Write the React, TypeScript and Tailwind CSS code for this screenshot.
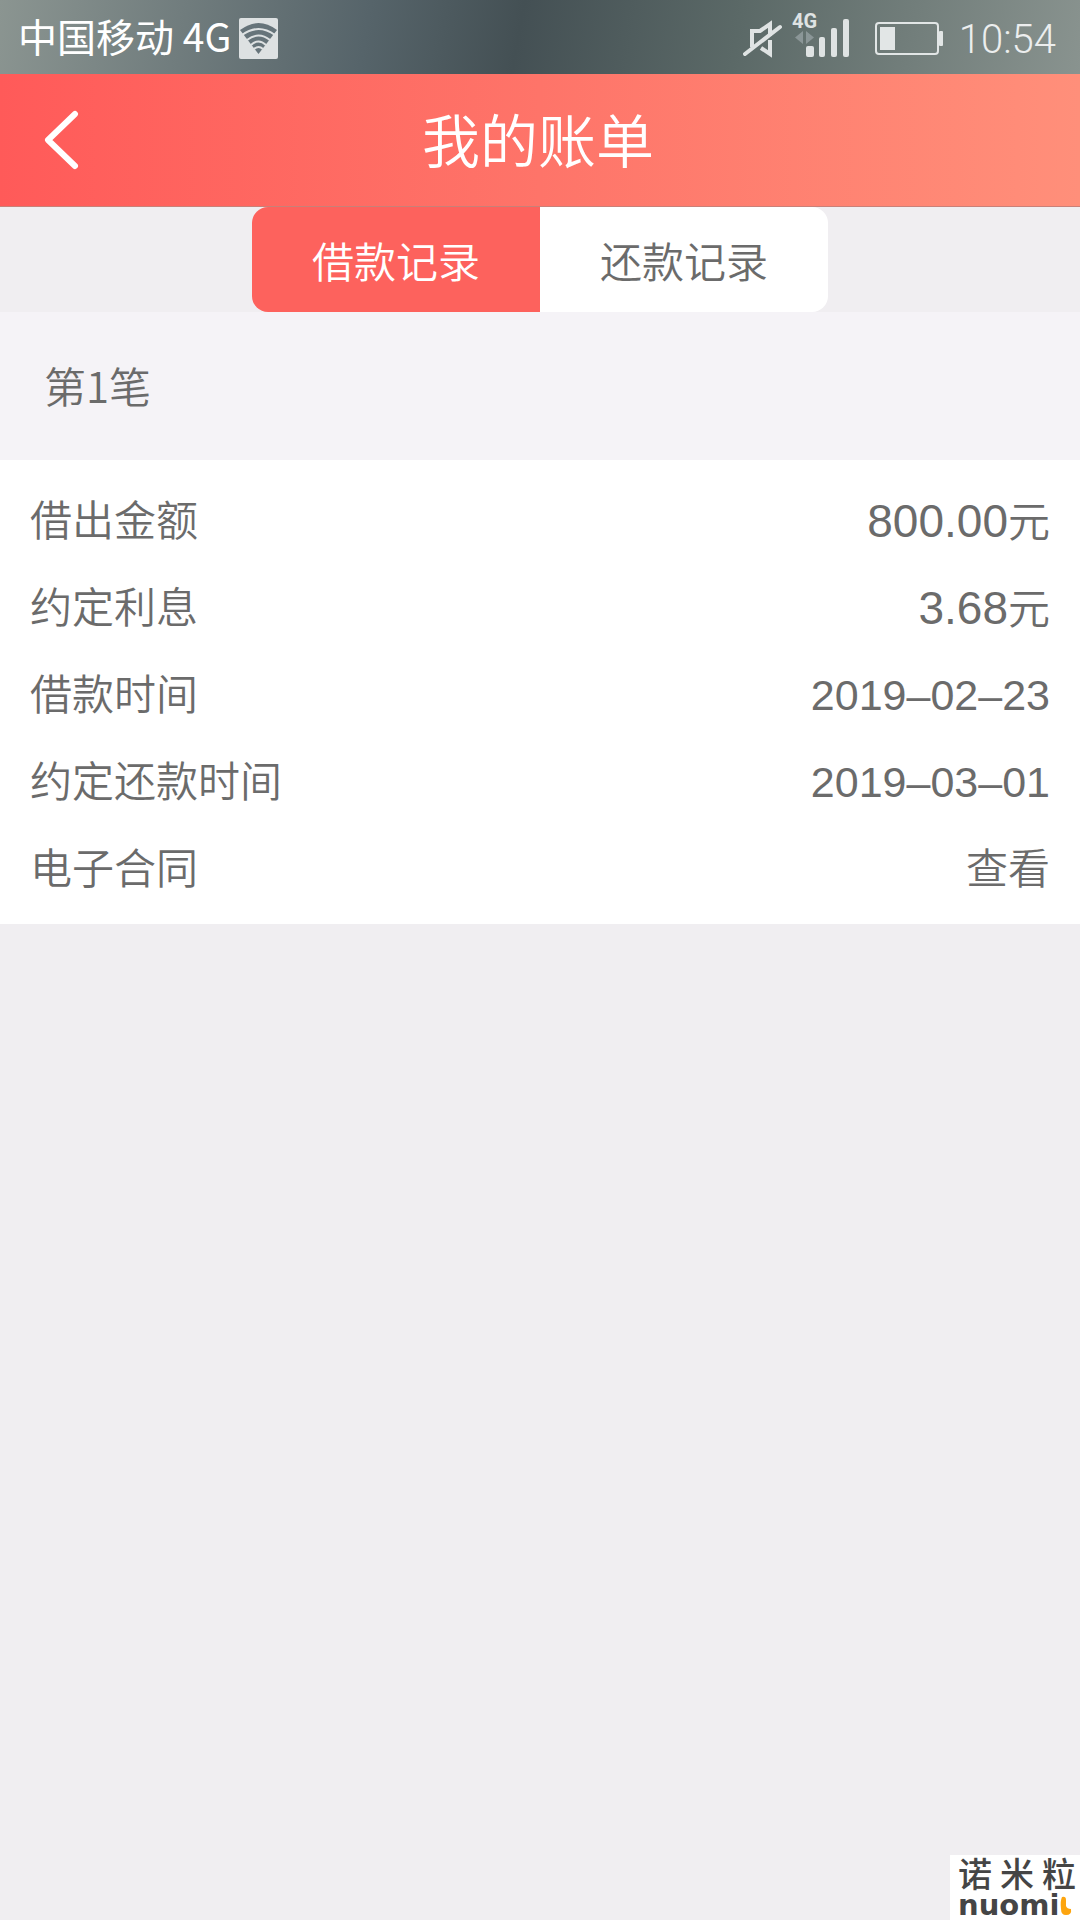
import React from 'react';

const records = [
  { label: '借出金额', amount: '800.00' },
  { label: '约定利息', amount: '3.68' },
  { label: '借款时间', date: '2019–02–23' },
  { label: '约定还款时间', date: '2019–03–01' }
];

function WifiIcon() {
  return (
    <svg width="40" height="42" viewBox="0 0 40 42" aria-hidden="true">
      <rect x="0" y="0" width="39" height="41" rx="2" fill="#dde1e2" />
      <path d="M1 12Q19.500 -2 38 12L19.500 36Z" fill="#66747a" />
      <g fill="none" stroke="#dde1e2" strokeWidth="2">
        <path d="M3 17Q19.500 5 36 17" />
        <path d="M8 22Q19.500 13 31 22" />
        <path d="M12 27Q19.500 20 27 27" />
        <path d="M15 31Q19.500 27 24 31" />
      </g>
    </svg>
  );
}

function MuteIcon() {
  return (
    <svg width="40" height="42" viewBox="0 0 40 42" fill="none" aria-hidden="true">
      <path d="M9 29V13h8L27 6v12M18 30l9 6V22" stroke="#dfe3e3" strokeWidth="4" />
      <path d="M2 36L37 9" stroke="#dfe3e3" strokeWidth="4" strokeLinecap="round" />
    </svg>
  );
}

function SignalIcon() {
  return (
    <svg width="60" height="48" viewBox="0 0 60 48" fill="#dfe3e3" aria-hidden="true">
      <text x="1" y="19" fontSize="20" fontWeight="700" fontFamily="Roboto, sans-serif">
        4G
      </text>
      <path d="M12 22v13l-8-6.500zM15 22v13l8-6.500z" fill="#8b9697" />
      <rect x="15" y="37" width="8" height="11" rx="2" />
      <rect x="28" y="28" width="6" height="20" rx="2" />
      <rect x="40" y="19" width="6" height="29" rx="2" />
      <rect x="52" y="10" width="6" height="38" rx="2" />
    </svg>
  );
}

function BatteryIcon() {
  return (
    <svg width="68" height="34" viewBox="0 0 68 34" fill="#e2e6e6" aria-hidden="true">
      <rect x="1" y="1" width="62" height="31" rx="3" fill="none" stroke="#e2e6e6" strokeWidth="2" />
      <rect x="5" y="5" width="15" height="23" />
      <rect x="64" y="9" width="4" height="15" rx="1" />
    </svg>
  );
}

export default function App() {
  return (
    <div className="flex min-h-screen w-full flex-col bg-[#f0eef1] font-['Noto_Sans_CJK_SC',sans-serif] text-[42px] font-[350] leading-[63px] text-[#6b6b6b]">
      <div className="flex h-[74px] items-center justify-between bg-[linear-gradient(100deg,#8b9591_0%,#56646a_34%,#445054_48%,#5b6967_68%,#89938f_100%)] pr-6 pl-[18px] text-[39px] font-normal text-white">
        <div className="flex items-center gap-2">
          <span className="pb-1">中国移动 4G</span>
          <div className="pt-1">
            <WifiIcon />
          </div>
        </div>
        <div className="flex items-center pt-1">
          <MuteIcon />
          <div className="mr-6 ml-2 pb-3">
            <SignalIcon />
          </div>
          <BatteryIcon />
          <span className="ml-4 font-['Roboto'] text-[40px] font-light text-[#eceeee]">
            10:54
          </span>
        </div>
      </div>

      <header className="grid h-[133px] grid-cols-[1fr_auto_1fr] items-center border-b border-[#c98078] bg-linear-to-r from-[#ff5a59] via-[#fe7469] to-[#ff8f7a] text-white">
        <button type="button" aria-label="返回" className="ml-11 w-9">
          <svg width="36" height="60" viewBox="0 0 36 60" fill="none" aria-hidden="true">
            <path
              d="M31 4L4 30L31 56"
              stroke="white"
              strokeWidth="6"
              strokeLinecap="round"
              strokeLinejoin="round"
            />
          </svg>
        </button>
        <h1 className="pr-1 pb-1 text-[58px] leading-[84px]">我的账单</h1>
      </header>

      <div className="flex h-[105px] justify-center">
        <div className="flex w-[576px] overflow-hidden rounded-2xl">
          <button type="button" className="flex-1 bg-[#fd625d] text-white">
            借款记录
          </button>
          <button type="button" className="flex-1 bg-white">
            还款记录
          </button>
        </div>
      </div>

      <h2 className="flex h-[148px] items-center bg-[#f5f3f7] px-11 pb-1">第1笔</h2>

      <dl className="bg-white px-[30px] pt-4 pb-[13px]">
        {records.map((item) => (
          <div key={item.label} className="flex h-[87px] items-center justify-between">
            <dt className="pb-1">{item.label}</dt>
            {item.amount ? (
              <dd>
                <span className="font-['Liberation_Sans'] text-[46px]">{item.amount}</span>元
              </dd>
            ) : (
              <dd className="pt-1 font-['Liberation_Sans'] text-[43px]">{item.date}</dd>
            )}
          </div>
        ))}
        <div className="flex h-[87px] items-center justify-between">
          <dt className="pb-1">电子合同</dt>
          <dd className="pb-1">
            <a href="#contract">查看</a>
          </dd>
        </div>
      </dl>

      <div className="mt-auto flex h-[65px] w-[130px] flex-col self-end bg-white pl-2 text-[#454545]">
        <div className="flex gap-2 text-[34px] leading-[36px] font-medium">
          <span>诺</span>
          <span>米</span>
          <span>粒</span>
        </div>
        <div className="flex items-center">
          <span className="font-['DejaVu_Sans'] text-[29px] leading-[29px] font-bold">nuomi</span>
          <svg width="14" height="20" viewBox="0 0 14 20" className="shrink-0" aria-hidden="true">
            <path d="M3 1Q7 0 7 4V10Q8 13 12 13Q13 19 7 19Q2 19 2 13Q1 5 3 1Z" fill="#fda50f" />
          </svg>
        </div>
      </div>
    </div>
  );
}
